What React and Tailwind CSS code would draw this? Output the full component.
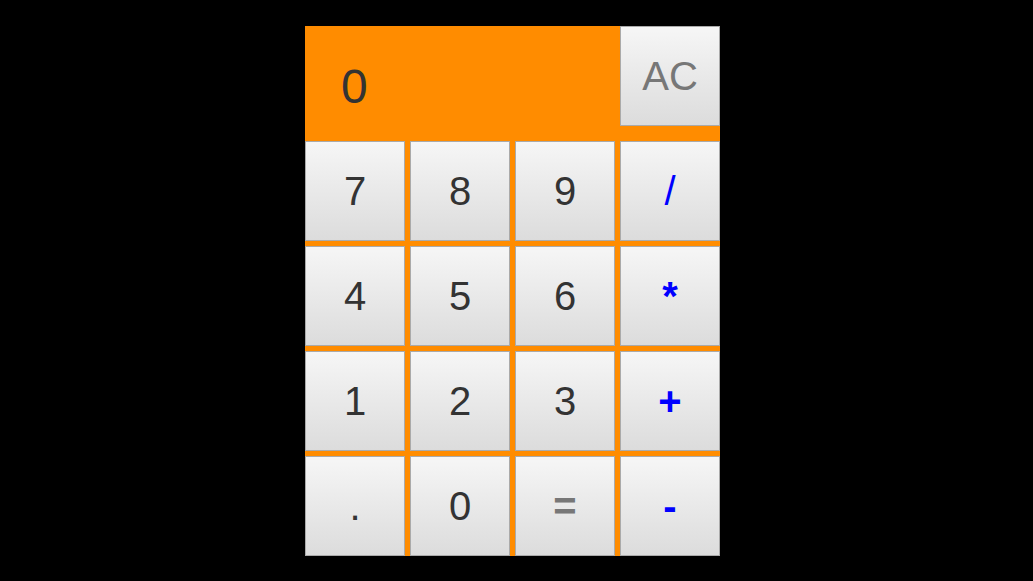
const rows = [
  ["7", "8", "9", "/"],
  ["4", "5", "6", "*"],
  ["1", "2", "3", "+"],
  [".", "0", "=", "-"],
];

const ops = ["/", "*", "+", "-"];

function Key({ label }) {
  let color = "text-[#333]";
  if (ops.includes(label)) color = "text-[#0000ff] font-bold";
  if (label === "/") color = "text-[#0000ff]";
  if (label === "=") color = "text-[#777] font-bold";
  if (label === "AC") color = "text-[#777]";

  return (
    <button
      className={`w-[100px] h-[100px] border border-[#aaa] bg-gradient-to-b from-[#f6f6f6] to-[#dcdcdc] flex items-center justify-center text-[40px] leading-none ${color}`}
    >
      {label}
    </button>
  );
}

export default function App() {
  return (
    <div
      className="w-[1033px] h-[581px] bg-black pt-[26px] pl-[305px]"
      style={{ fontFamily: '"Liberation Sans", Arial, sans-serif' }}
    >
      <div className="w-[415px] bg-[#ff8c00] flex flex-col gap-[5px]">
        {/* Display row */}
        <div className="flex gap-[5px] h-[110px]">
          <div className="w-[310px] flex items-center pl-[36px] pt-[12px] text-[48px] text-[#333]">
            0
          </div>
          <Key label="AC" />
        </div>

        {rows.map((row, i) => (
          <div key={i} className="flex gap-[5px]">
            {row.map((k) => (
              <Key key={k} label={k} />
            ))}
          </div>
        ))}
      </div>
    </div>
  );
}
